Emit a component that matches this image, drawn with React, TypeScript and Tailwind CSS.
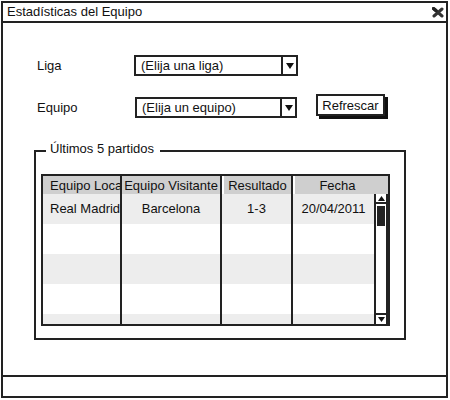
import React from 'react';

const rows = [
  { local: 'Real Madrid', visitante: 'Barcelona', resultado: '1-3', fecha: '20/04/2011' },
  { local: '', visitante: '', resultado: '', fecha: '' },
  { local: '', visitante: '', resultado: '', fecha: '' },
  { local: '', visitante: '', resultado: '', fecha: '' },
  { local: '', visitante: '', resultado: '', fecha: '' },
];

const CloseIcon = () => (
  <svg width="12" height="11" viewBox="0 0 12 11">
    <path d="M2 2 L10 9 M10 2 L2 9" stroke="#333" strokeWidth="3" strokeLinecap="round" />
    <path d="M1.5 1.5 L4 3.5" stroke="#222" strokeWidth="3.5" strokeLinecap="round" />
  </svg>
);

const ArrowDown = () => (
  <svg width="8" height="6" viewBox="0 0 8 6">
    <path d="M0 0 H8 L4 6 Z" fill="#111" />
  </svg>
);

const ArrowUp = () => (
  <svg width="7" height="5" viewBox="0 0 7 5">
    <path d="M0 5 H7 L3.5 0 Z" fill="#111" />
  </svg>
);

const Select = ({ text, width }: { text: string; width: string }) => (
  <div className={`${width} h-[21px] border-2 border-[#222] flex`}>
    <div className="flex-1 pl-[5px] flex items-center leading-none">{text}</div>
    <div className="w-[15px] border-l-2 border-[#222] flex items-center justify-center">
      <ArrowDown />
    </div>
  </div>
);

const App = () => {
  return (
    <div className="w-[450px] h-[400px] bg-white pt-px pl-px text-[13px] text-[#111] font-['Liberation_Sans',Arial,sans-serif]">
      <div className="w-[447px] h-[397px] border-2 border-[#222] flex flex-col">
        <div className="h-[20px] border-b-2 border-[#222] flex items-center justify-between pl-[4px] pr-[2px]">
          <span>Estadísticas del Equipo</span>
          <CloseIcon />
        </div>

        <div className="flex-1">
          <div className="pl-[34px] pt-[32px]">
            <div className="flex items-center">
              <div className="w-[97px]">Liga</div>
              <Select text="(Elija una liga)" width="w-[164px]" />
            </div>
            <div className="flex items-start mt-[21px]">
              <div className="w-[98px] h-[21px] flex items-center">Equipo</div>
              <Select text="(Elija un equipo)" width="w-[162px]" />
              <button className="ml-[19px] -mt-[3px] w-[69px] h-[22px] border-2 border-[#222] bg-white shadow-[3px_3px_0_#111] flex items-center justify-center leading-none">
                Refrescar
              </button>
            </div>
          </div>

          <fieldset className="ml-[31px] mt-[23px] w-[372px] border-2 border-[#222] p-0">
            <legend className="ml-[10px] pl-[4px] pr-[6px] pb-[4px] leading-[15px]">Últimos 5 partidos</legend>
            <div className="ml-[5px] mt-[14px] mb-[12px] w-[349px] h-[152px] border-2 border-[#222] flex flex-col">
              <div className="h-[18px] flex bg-[#cfcfcf] leading-none">
                <div className="w-[79px] border-r-2 border-[#222] pl-[7px] flex items-center overflow-hidden whitespace-nowrap">Equipo Loca</div>
                <div className="w-[100px] border-r-2 border-[#222] flex items-center justify-center whitespace-nowrap">Equipo Visitante</div>
                <div className="w-[71px] border-r-2 border-l-2 border-l-white border-r-[#222] flex items-center justify-center">Resultado</div>
                <div className="flex-1 border-l-2 border-white flex items-center justify-center pr-[8px]">Fecha</div>
              </div>
              <div className="flex-1 flex overflow-hidden">
                <div className="flex-1 flex flex-col overflow-hidden">
                  {rows.map((r, i) => (
                    <div key={i} className={`h-[30px] shrink-0 flex ${i % 2 === 0 ? 'bg-[#ededed]' : 'bg-white'}`}>
                      <div className="w-[79px] border-r-2 border-[#222] pl-[7px] pt-[5px] whitespace-nowrap overflow-hidden">{r.local}</div>
                      <div className="w-[100px] border-r-2 border-[#222] pt-[5px] text-center">{r.visitante}</div>
                      <div className="w-[71px] border-r-2 border-[#222] pt-[5px] text-center">{r.resultado}</div>
                      <div className="flex-1 pt-[5px] text-center">{r.fecha}</div>
                    </div>
                  ))}
                </div>
                <div className="w-[14px] border-x-2 border-[#222] flex flex-col bg-white">
                  <div className="h-[10px] border-b-2 border-[#222] flex items-center justify-center">
                    <ArrowUp />
                  </div>
                  <div className="mt-[2px] mx-[1px] h-[20px] bg-[#222]" />
                  <div className="flex-1" />
                  <div className="h-[11px] border-t-2 border-[#222] flex items-center justify-center">
                    <svg width="7" height="5" viewBox="0 0 7 5">
                      <path d="M0 0 H7 L3.5 5 Z" fill="#111" />
                    </svg>
                  </div>
                </div>
              </div>
            </div>
          </fieldset>
        </div>

        <div className="h-[21px] border-t-2 border-[#222]" />
      </div>
    </div>
  );
};

export default App;
